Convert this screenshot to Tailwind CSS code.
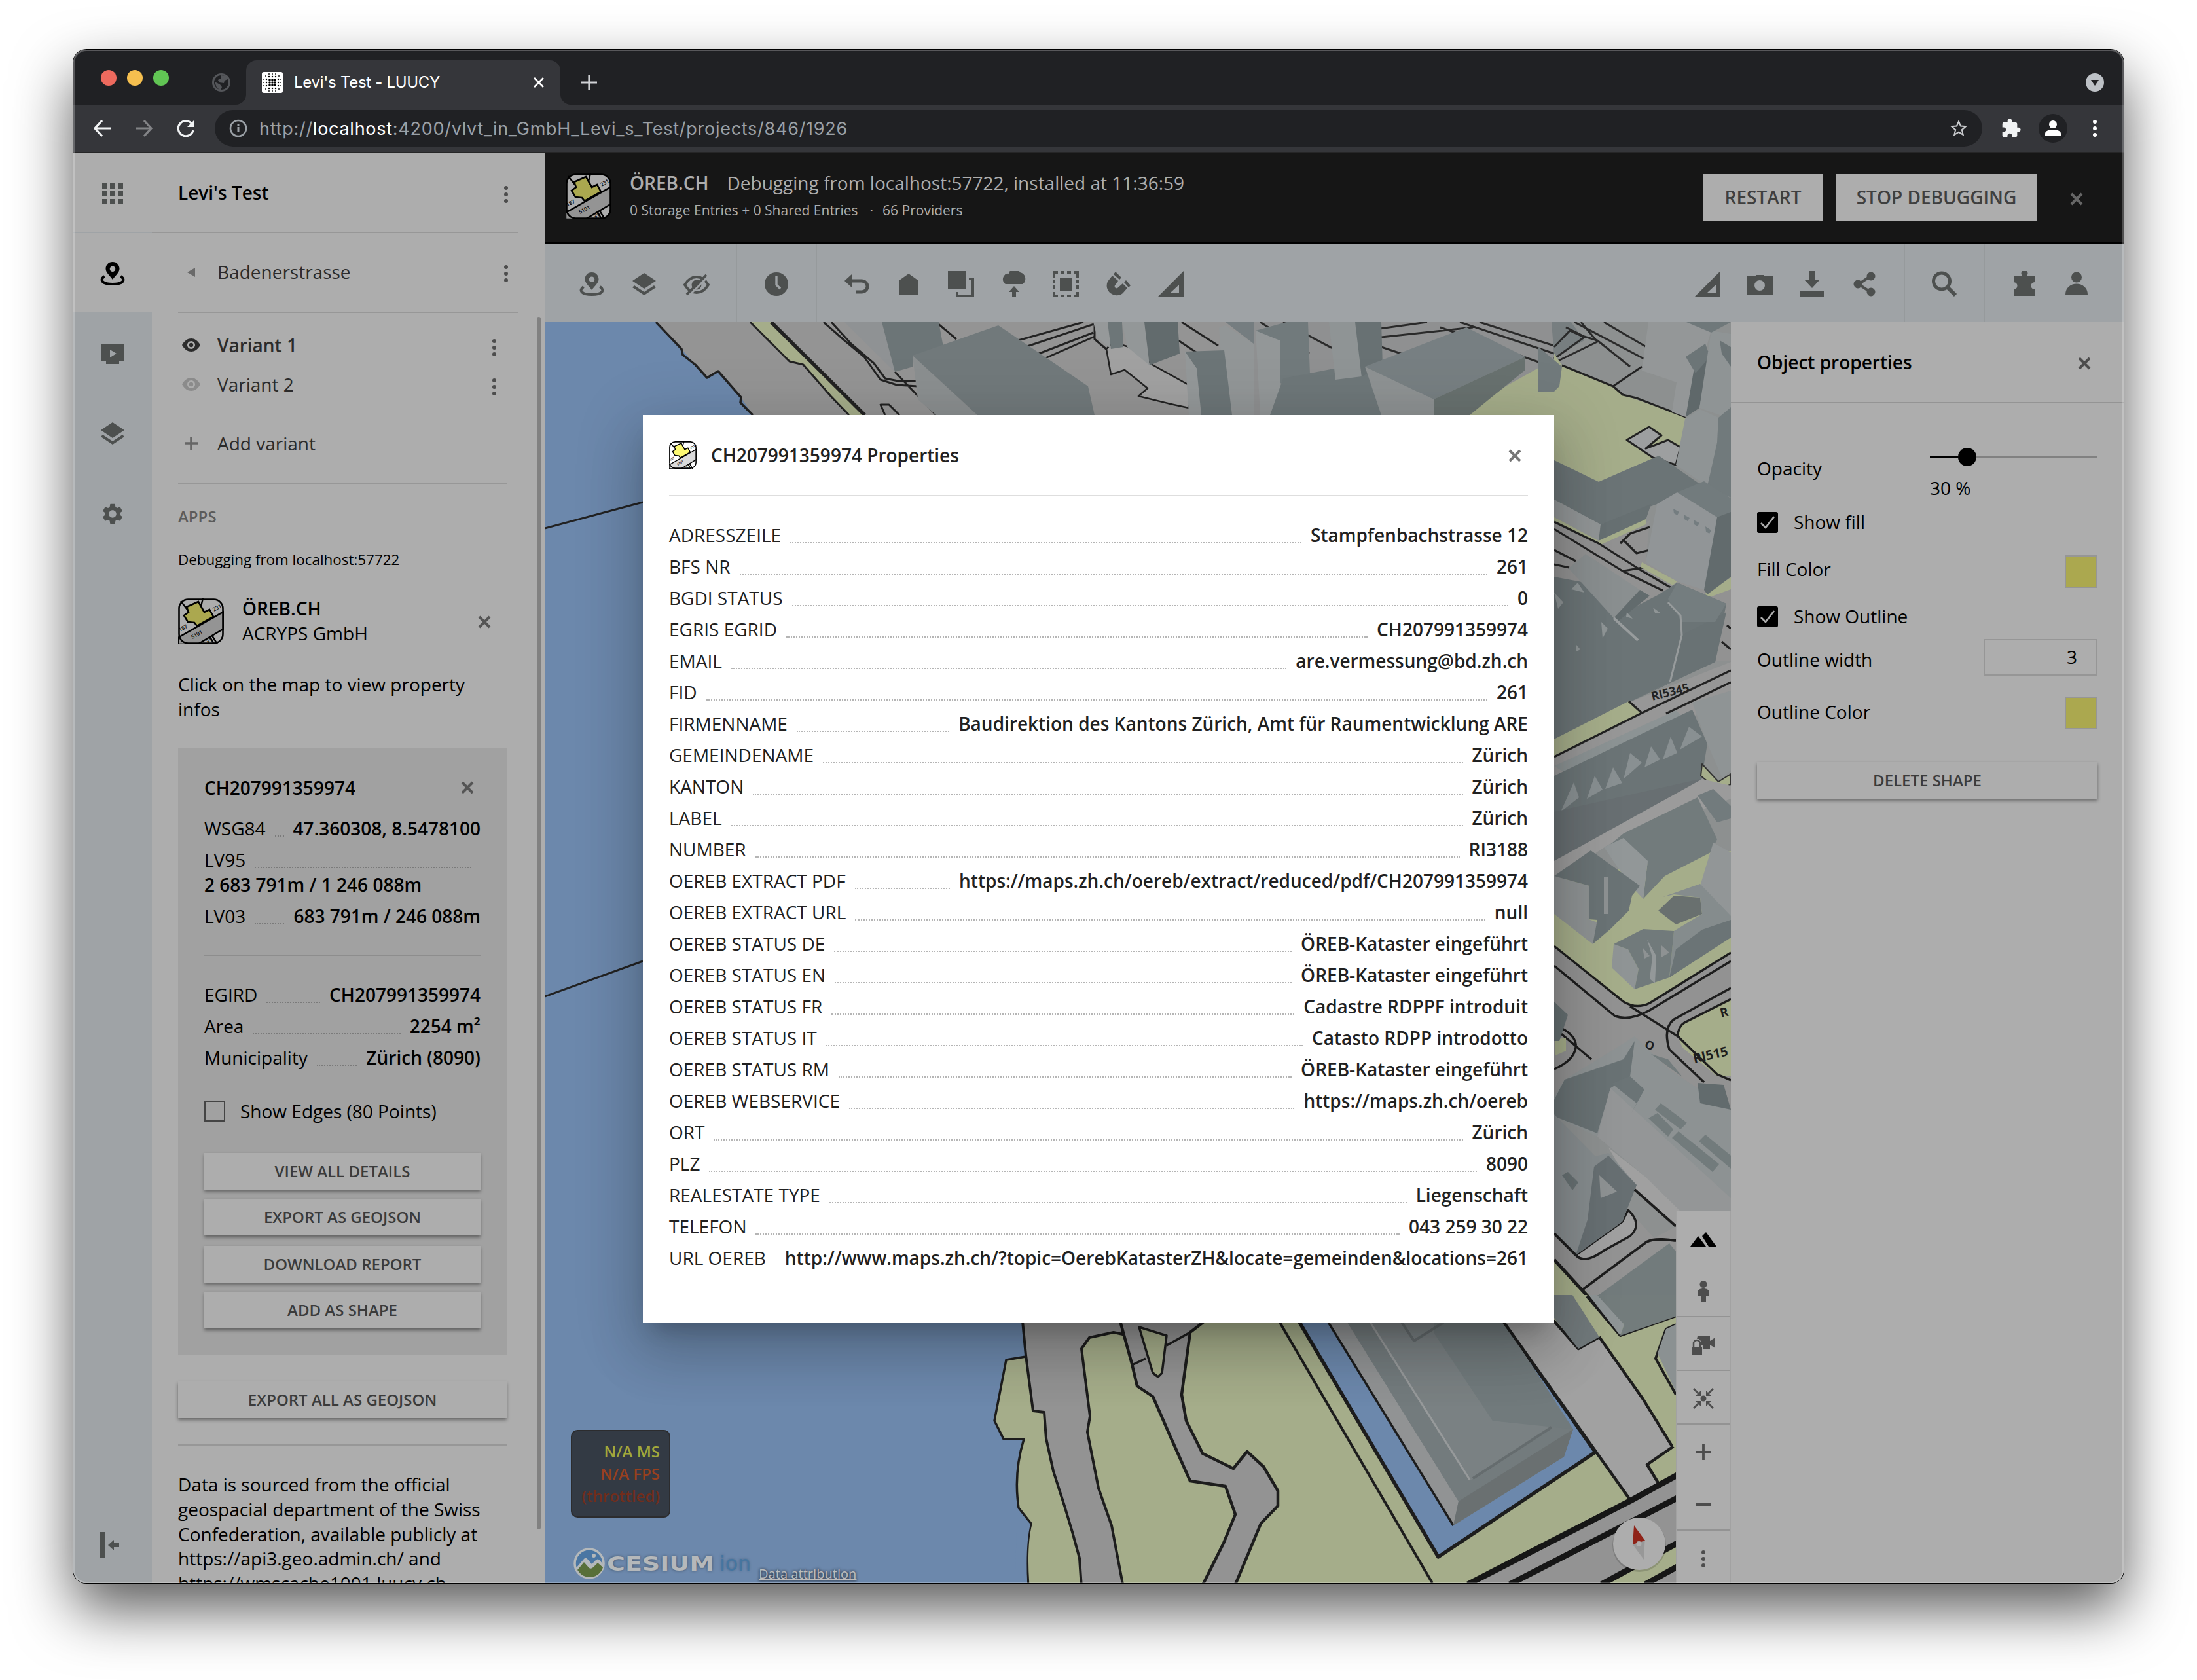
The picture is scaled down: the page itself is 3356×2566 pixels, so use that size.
<!DOCTYPE html>
<html lang="en">
<head>
<meta charset="utf-8">
<title>Levi's Test - LUUCY</title>
<script src="https://cdn.jsdelivr.net/npm/@tailwindcss/browser@4"></script>
</head>
<body class="w-[3356px] h-[2566px] bg-white overflow-hidden font-['Open_Sans',sans-serif] text-[28px] leading-[38px] text-black">

<svg width="0" height="0" class="hidden">
  <defs>
    <symbol id="oreb" viewBox="0 0 70 70">
      <clipPath id="orebClip"><rect x="1" y="1" width="68" height="68" rx="14"/></clipPath>
      <rect x="1.5" y="1.5" width="67" height="67" rx="14" fill="var(--bg,#adadad)"/>
      <g clip-path="url(#orebClip)">
        <path d="M0 60 70 20V46L30 70H0Z" fill="var(--road,#949494)" stroke="#000" stroke-width="2.4"/>
        <path d="M4 4 14 17M38 0 35 12M52 57 60 70M49 59 54 68" stroke="#000" stroke-width="2.4" fill="none"/>
        <path d="M31 5 40 21 48 17 54 28 29 42 25 37 15 36 9 26 16 21 13 13Z" fill="var(--lot,#aba84f)" stroke="#000" stroke-width="2.6"/>
        <g font-family="Open Sans" font-size="8" font-weight="600">
          <text transform="translate(55 20) rotate(-30)">231</text>
          <text transform="translate(3 51) rotate(-30)">187</text>
          <text transform="translate(22 62) rotate(-30)">5101</text>
          <text transform="translate(45 69) rotate(-30)">31</text>
        </g>
      </g>
      <rect x="1.5" y="1.5" width="67" height="67" rx="14" fill="none" stroke="#000" stroke-width="2.6"/>
    </symbol>
    <symbol id="x" viewBox="0 0 20 20"><path d="M2 2 18 18M18 2 2 18" stroke="currentColor" stroke-width="4" fill="none"/></symbol>
    <symbol id="dots" viewBox="0 0 8 28"><circle cx="4" cy="4" r="3"/><circle cx="4" cy="14" r="3"/><circle cx="4" cy="24" r="3"/></symbol>
    <symbol id="pin" viewBox="0 0 40 40"><path fill-rule="evenodd" d="M20 2C13.500 2 9.500 7 9.500 12.500C9.500 18 15 22 20 29C25 22 30.500 18 30.500 12.500C30.500 7 26.500 2 20 2ZM20 8.500A4.200 4.200 0 1 1 20 17A4.200 4.200 0 1 1 20 8.500Z"/><path d="M7.500 24C-1 30 5 36 20 36S41 30 32.500 24" fill="none" stroke="currentColor" stroke-width="4"/></symbol>
    <symbol id="layers" viewBox="0 0 40 40"><path d="M20 3 38 15 20 27 2 15ZM5 22 20 32 35 22 38 25 20 37 2 25Z"/></symbol>
    <symbol id="ruler" viewBox="0 0 40 40"><path fill-rule="evenodd" d="M40 0V40H0ZM33 21V33H20Z"/></symbol>
    <symbol id="eye" viewBox="0 0 28 20"><path fill-rule="evenodd" d="M0 10C4 3 9 0 14 0S24 3 28 10C24 17 19 20 14 20S4 17 0 10ZM14 4A6 6 0 1 0 14 16A6 6 0 1 0 14 4Z"/><circle cx="14" cy="10" r="3.200"/></symbol>
    <symbol id="puzzle" viewBox="0 0 24 24"><path d="M20.500 11H19V7c0-1.100-.9-2-2-2h-4V3.500C13 2.120 11.880 1 10.500 1S8 2.120 8 3.500V5H4c-1.100 0-1.990.9-1.990 2v3.800H3.500c1.490 0 2.700 1.210 2.700 2.700s-1.210 2.700-2.700 2.700H2V20c0 1.100.9 2 2 2h3.800v-1.500c0-1.490 1.210-2.700 2.700-2.700 1.490 0 2.700 1.210 2.700 2.700V22H17c1.100 0 2-.9 2-2v-4h1.500c1.380 0 2.500-1.120 2.500-2.500S21.880 11 20.500 11z"/></symbol>
  </defs>
</svg>

<div class="pt-[76px] pl-[112px]">
<div class="relative w-[3132px] h-[2342px] rounded-[20px] shadow-[0_0_0_1px_#000,0_40px_90px_rgba(0,0,0,0.65)]">
<div class="flex flex-col w-full h-full rounded-[20px] overflow-hidden bg-[#adadad]">

  <!-- tab strip -->
  <div class="h-[84px] shrink-0 bg-[#202124] flex items-start font-['Inter',sans-serif]">
    <div class="flex gap-4 ml-[42px] mt-[31px]">
      <div class="size-6 rounded-full bg-[#ed6a5e]"></div><div class="size-6 rounded-full bg-[#f5bf4f]"></div><div class="size-6 rounded-full bg-[#61c554]"></div>
    </div>
    <svg class="size-[30px] ml-[65px] mt-[35px]" viewBox="0 0 30 30"><circle cx="15" cy="15" r="12.500" fill="none" stroke="#54565a" stroke-width="3"/><path d="M15 4 22 5 25 10 20 12 19 16 12 15 10 11 14 9ZM5 14 13 18 16 22 14 27 8 23Z" fill="#54565a"/></svg>
    <div class="relative w-[480px] h-[68px] mt-4 ml-[23px] rounded-t-[16px] bg-[#35363a] flex items-center pl-6 pr-[24px] text-white text-[24px]">
      <svg class="absolute -left-4 bottom-0 size-4" viewBox="0 0 16 16"><path d="M16 0V16H0A16 16 0 0 0 16 0Z" fill="#35363a"/></svg>
      <svg class="absolute -right-4 bottom-0 size-4" viewBox="0 0 16 16"><path d="M0 0V16H16A16 16 0 0 1 0 0Z" fill="#35363a"/></svg>
      <svg class="size-8" viewBox="0 0 32 32"><rect width="32" height="32" rx="3" fill="#fff"/>
        <g stroke="#000" stroke-linecap="round"><path d="M11 3H11M16 3H16M21 3H21M11 29H11M16 29H16M21 29H21M3 11V11M3 16V16M3 21V21M29 11V11M29 16V16M29 21V21M6 6H6M26 6H26M6 26H6M26 26H26" stroke-width="1.800"/><path d="M11 7H11M16 7H16M21 7H21M11 25H11M16 25H16M21 25H21M7 11V11M7 16V16M7 21V21M25 11V11M25 16V16M25 21V21" stroke-width="2.500"/><path d="M12 12H12M16 12H16M20 12H20M12 16H12M16 16H16M20 16H20M12 20H12M16 20H16M20 20H20" stroke-width="3.600"/></g></svg>
      <span class="ml-[17px] tracking-[-0.3px] whitespace-nowrap">Levi's Test - LUUCY</span>
      <svg class="size-[18px] ml-auto" viewBox="0 0 18 18"><path d="M2 2 16 16M16 2 2 16" stroke="#fff" stroke-width="2.600"/></svg>
    </div>
    <svg class="size-6 ml-8 mt-[38px]" viewBox="0 0 24 24"><path d="M12 0V24M0 12H24" stroke="#d0d2d5" stroke-width="3.200"/></svg>
    <svg class="size-7 ml-auto mr-[30px] mt-9" viewBox="0 0 28 28"><circle cx="14" cy="14" r="14" fill="#bdc1c6"/><path d="M8 10H20L14 19Z" fill="#202124"/></svg>
  </div>

  <!-- address bar -->
  <div class="h-[74px] shrink-0 bg-[#35363a] border-b-2 border-[#262627] flex items-center">
    <svg class="w-[26px] h-[26px] ml-[31px]" viewBox="0 0 26 26"><path d="M13 1 2 13 13 25M2 13H26" fill="none" stroke="#f1f3f4" stroke-width="3.200"/></svg>
    <svg class="w-[26px] h-[26px] ml-[38px]" viewBox="0 0 26 26"><path d="M13 1 24 13 13 25M24 13H0" fill="none" stroke="#828386" stroke-width="3.200"/></svg>
    <svg class="size-7 ml-[37px]" viewBox="0 0 28 28"><path d="M23.500 8A11.500 11.500 0 1 0 25 17" fill="none" stroke="#f1f3f4" stroke-width="3.200"/><path d="M27 1V12H16Z" fill="#f1f3f4"/></svg>
    <div class="w-[2700px] h-14 ml-[30px] rounded-full bg-[#202124] flex items-center pl-[22px] pr-5">
      <svg class="size-7" viewBox="0 0 28 28"><circle cx="14" cy="14" r="12" fill="none" stroke="#9aa0a6" stroke-width="2.600"/><path d="M12.500 12H15.500V20H12.500ZM12.500 7.500H15.500V10.300H12.500Z" fill="#9aa0a6"/></svg>
      <span class="ml-[18px] pt-px font-['Inter',sans-serif] text-[27px] tracking-[0.73px] text-[#9aa0a6] whitespace-nowrap">http://<span class="text-white">localhost</span>:4200/vlvt_in_GmbH_Levi_s_Test/projects/846/1926</span>
      <svg class="size-8 ml-auto" viewBox="0 0 24 24" fill="#c8cacd"><path d="M22 9.240l-7.190-.62L12 2 9.190 8.630 2 9.240l5.460 4.730L5.820 21 12 17.270 18.180 21l-1.630-7.030L22 9.240zM12 15.400l-3.760 2.270 1-4.280-3.320-2.880 4.380-.38L12 6.100l1.710 4.040 4.380.38-3.320 2.880 1 4.280L12 15.400z"/></svg>
    </div>
    <svg class="size-8 ml-[28px]" viewBox="0 0 24 24" fill="#f1f3f4"><use href="#puzzle"/></svg>
    <div class="size-11 rounded-full bg-[#202124] ml-[26px] flex items-center justify-center"><svg class="size-6" viewBox="0 0 24 24" fill="#fff"><circle cx="12" cy="6" r="6"/><path d="M0 24V20C0 16 6 14 12 14S24 16 24 20V24Z"/></svg></div>
    <svg class="w-2 h-7 ml-[38px] fill-white"><use href="#dots"/></svg>
  </div>

  <div class="flex flex-1 min-h-0">
    <!-- icon rail -->
    <div class="w-[120px] shrink-0 bg-[#9fa3a6] flex flex-col items-center text-[#4d504f] fill-[#4d504f]">
      <div class="w-full h-[120px] bg-[#adadad] flex items-center justify-center">
        <svg class="size-8 mt-1" viewBox="0 0 32 32"><path d="M0 0h8v8H0zM12 0h8v8h-8zM24 0h8v8h-8zM0 12h8v8H0zM12 12h8v8h-8zM24 12h8v8h-8zM0 24h8v8H0zM12 24h8v8h-8zM24 24h8v8h-8z"/></svg>
      </div>
      <div class="w-full h-[120px] mt-0.5 bg-[#adadad] flex items-center justify-center text-black fill-black"><svg class="size-10 mt-1"><use href="#pin"/></svg></div>
      <svg class="w-9 h-[30px] mt-[50px]" viewBox="0 0 36 30"><path fill-rule="evenodd" d="M0 0H36V26H28V30H8V26H0ZM14 8V20L24 14Z"/></svg>
      <svg class="size-10 mt-[86px]"><use href="#layers"/></svg>
      <svg class="size-[38px] mt-[84px]" viewBox="0 0 24 24"><path d="M19.140 12.940c.04-.3.06-.61.06-.94 0-.32-.02-.64-.07-.94l2.030-1.580c.18-.14.23-.41.12-.61l-1.920-3.320c-.12-.22-.37-.29-.59-.22l-2.390.96c-.5-.38-1.030-.7-1.620-.94l-.36-2.540c-.04-.24-.24-.41-.48-.41h-3.840c-.24 0-.43.17-.47.41l-.36 2.540c-.59.24-1.130.57-1.620.94l-2.390-.96c-.22-.08-.47 0-.59.22L2.740 8.870c-.12.21-.08.47.12.61l2.030 1.580c-.05.3-.09.63-.09.94s.02.64.07.94l-2.030 1.580c-.18.14-.23.41-.12.61l1.920 3.320c.12.22.37.29.59.22l2.390-.96c.5.38 1.030.7 1.620.94l.36 2.540c.05.24.24.41.48.41h3.840c.24 0 .44-.17.47-.41l.36-2.540c.59-.24 1.130-.56 1.620-.94l2.390.96c.22.08.47 0 .59-.22l1.920-3.320c.12-.22.07-.47-.12-.61l-2.010-1.580zM12 15.600c-1.980 0-3.600-1.620-3.600-3.600s1.620-3.600 3.600-3.600 3.600 1.620 3.600 3.600-1.620 3.600-3.600 3.600z"/></svg>
      <svg class="w-[30px] h-10 mt-auto mb-[38px] mr-[10px]" viewBox="0 0 30 40"><path d="M0 0H8V40H0ZM13 20 22 12V17H30V23H22V28Z"/></svg>
    </div>

    <!-- sidebar -->
    <div class="relative w-[600px] shrink-0 flex flex-col overflow-hidden text-[#2b2b2b]">
      <div class="h-[122px] shrink-0 mr-10 pl-10 pr-[15px] border-b-2 border-[#979797] flex items-center justify-between">
        <span class="font-semibold text-black">Levi's Test</span>
        <svg class="w-2 h-7 mt-[6px] fill-[#4d4d4d]"><use href="#dots"/></svg>
      </div>
      <div class="h-[122px] shrink-0 mx-10 pr-[15px] pb-[2px] border-b-2 border-[#979797] flex items-center">
        <svg class="w-3 h-[14px] ml-[14px] mt-px" viewBox="0 0 12 14"><path d="M12 0V14L0 7Z" fill="#6a6a6a"/></svg>
        <span class="ml-[34px]">Badenerstrasse</span>
        <svg class="w-2 h-7 mt-[6px] ml-auto fill-[#4d4d4d]"><use href="#dots"/></svg>
      </div>
      <div class="pl-10 w-[542px] flex flex-col shrink-0">
        <div class="mt-[19px] h-[60px] flex items-center pl-[6px] pr-[15px]"><svg class="w-7 h-5 fill-[#2b2b2b]"><use href="#eye"/></svg><span class="ml-[26px] font-semibold">Variant 1</span><svg class="w-2 h-7 mt-2 ml-auto fill-[#4d4d4d]"><use href="#dots"/></svg></div>
        <div class="h-[60px] flex items-center pl-[6px] pr-[15px]"><svg class="w-7 h-5 fill-[#8b8b8b]"><use href="#eye"/></svg><span class="ml-[26px]">Variant 2</span><svg class="w-2 h-7 mt-2 ml-auto fill-[#4d4d4d]"><use href="#dots"/></svg></div>
        <div class="mt-[30px] h-[60px] flex items-center pl-[10px]"><svg class="size-5" viewBox="0 0 20 20"><path d="M10 0V20M0 10H20" stroke="#666" stroke-width="3.600"/></svg><span class="ml-[30px]">Add variant</span></div>
        <div class="mt-[31px] h-0.5 bg-[#979797]"></div>
        <div class="mt-[33px] text-[24px] leading-8 text-[#5b5b5b] font-semibold">APPS</div>
        <div class="mt-[35px] text-[22.4px] leading-[30px] text-black">Debugging from localhost:57722</div>
        <div class="mt-[44px] h-[70px] flex items-center text-black">
          <svg class="size-[70px]"><use href="#oreb"/></svg>
          <div class="ml-[28px] -mt-0.5"><div class="font-semibold">ÖREB.CH</div><div>ACRYPS GmbH</div></div>
          <svg class="size-5 ml-auto mr-[24px] mt-px text-[#555]"><use href="#x"/></svg>
        </div>
        <div class="mt-[42px] text-black">Click on the map to view property<br>infos</div>
        <div class="mt-10 h-[928px] bg-[#a1a1a1] px-10 pt-[42px] flex flex-col text-black">
          <div class="flex items-center justify-between"><span class="font-semibold">CH207991359974</span><svg class="size-5 mr-[10px] text-[#555]"><use href="#x"/></svg></div>
          <div class="mt-[24px] flex items-baseline"><span>WSG84</span><i class="flex-1 mx-[14px] border-b-2 border-dotted border-[#7a7a7a] translate-y-0.5"></i><b class="font-semibold">47.360308, 8.5478100</b></div>
          <div class="mt-[10px] flex items-baseline"><span>LV95</span><i class="flex-1 mx-[14px] border-b-2 border-dotted border-[#7a7a7a] translate-y-0.5"></i></div>
          <div class="font-semibold">2 683 791m / 1 246 088m</div>
          <div class="mt-[10px] flex items-baseline"><span>LV03</span><i class="flex-1 mx-[14px] border-b-2 border-dotted border-[#7a7a7a] translate-y-0.5"></i><b class="font-semibold">683 791m / 246 088m</b></div>
          <div class="mt-10 h-0.5 bg-[#8d8d8d]"></div>
          <div class="mt-[40px] flex items-baseline"><span>EGIRD</span><i class="flex-1 mx-[14px] border-b-2 border-dotted border-[#7a7a7a] translate-y-0.5"></i><b class="font-semibold">CH207991359974</b></div>
          <div class="mt-[10px] flex items-baseline"><span>Area</span><i class="flex-1 mx-[14px] border-b-2 border-dotted border-[#7a7a7a] translate-y-0.5"></i><b class="font-semibold">2254 m²</b></div>
          <div class="mt-[10px] flex items-baseline"><span>Municipality</span><i class="flex-1 mx-[14px] border-b-2 border-dotted border-[#7a7a7a] translate-y-0.5"></i><b class="font-semibold">Zürich (8090)</b></div>
          <div class="mt-[47px] h-8 flex items-center"><div class="size-8 border-2 border-[#444]"></div><span class="ml-[23px]">Show Edges (80 Points)</span></div>
          <div class="mt-12 flex flex-col text-[24px] text-[#3b3b3b] font-semibold text-center leading-[55px]">
            <div class="h-14 bg-[#adadad] shadow-[0_3px_5px_rgba(0,0,0,0.4)]">VIEW ALL DETAILS</div>
            <div class="h-14 mt-[14px] bg-[#adadad] shadow-[0_3px_5px_rgba(0,0,0,0.4)]">EXPORT AS GEOJSON</div>
            <div class="h-14 mt-4 bg-[#adadad] shadow-[0_3px_5px_rgba(0,0,0,0.4)]">DOWNLOAD REPORT</div>
            <div class="h-14 mt-[14px] bg-[#adadad] shadow-[0_3px_5px_rgba(0,0,0,0.4)]">ADD AS SHAPE</div>
          </div>
        </div>
        <div class="mt-10 h-14 bg-[#adadad] shadow-[0_3px_5px_rgba(0,0,0,0.4)] text-[24px] text-[#3b3b3b] font-semibold text-center leading-[55px]">EXPORT ALL AS GEOJSON</div>
        <div class="mt-10 h-0.5 bg-[#979797]"></div>
        <div class="mt-[41px] text-black leading-[37.8px] whitespace-nowrap">Data is sourced from the official<br>geospacial department of the Swiss<br>Confederation, available publicly at<br>https://api3.geo.admin.ch/ and<br>https://wmscache1001.luucy.ch</div>
      </div>
      <div class="absolute left-[588px] top-[250px] w-[6px] h-[1852px] rounded-full bg-[#818181]"></div>
    </div>

    <!-- main column -->
    <div class="flex-1 flex flex-col min-w-0">
      <div class="h-[138px] shrink-0 bg-[#161616] border-b-2 border-black flex items-center pl-8 pr-[62px] text-[#adadad]">
        <svg class="size-[70px] -mt-[4px]"><use href="#oreb"/></svg>
        <div class="ml-[28px] -mt-[8px]">
          <div class="flex"><span class="font-semibold">ÖREB.CH</span><span class="ml-7">Debugging from localhost:57722, installed at 11:36:59</span></div>
          <div class="mt-[8px] text-[21px] leading-[30px] flex"><span>0 Storage Entries + 0 Shared Entries</span><span class="ml-[18px]">·</span><span class="ml-[14px]">66 Providers</span></div>
        </div>
        <div class="ml-auto flex gap-5 font-semibold text-[#3f3f3f] text-center leading-[71px]">
          <div class="w-[182px] h-[72px] bg-[#adadad]">RESTART</div><div class="w-[308px] h-[72px] bg-[#adadad]">STOP DEBUGGING</div>
        </div>
        <svg class="size-5 ml-[50px] mt-1 text-[#666]"><use href="#x"/></svg>
      </div>

      <div class="h-[120px] shrink-0 bg-[#9fa3a6] flex text-[#4d504f] fill-[#4d504f]">
        <div class="w-[294px] pl-8 pt-[42px] border-r-2 border-[#969a9c] flex">
          <svg class="size-10 mx-5"><use href="#pin"/></svg>
          <svg class="size-10 mx-5"><use href="#layers"/></svg>
          <svg class="size-10 mx-5" viewBox="0 0 40 40"><path d="M2 21C8 11 14 9 20 9S32 11 38 21C32 31 26 33 20 33S8 31 2 21Z" fill="none" stroke="currentColor" stroke-width="4"/><circle cx="20" cy="21" r="7.500"/><path d="M8 38 38 8" stroke="#9fa3a6" stroke-width="3"/><path d="M5 36 35 6" stroke="currentColor" stroke-width="3.800"/></svg>
        </div>
        <div class="w-[122px] px-5 pt-[42px] border-r-2 border-[#969a9c] flex">
          <svg class="size-10 mx-5" viewBox="0 0 40 40"><circle cx="20" cy="20" r="18"/><path d="M20 7V21L26 27" fill="none" stroke="#9fa3a6" stroke-width="3.400"/></svg>
        </div>
        <div class="pl-5 pt-[42px] flex">
          <svg class="size-10 mx-5" viewBox="0 0 40 40"><path d="M2 15 13 5V25Z"/><path d="M11 15H28A9 8.500 0 0 1 28 32H19" fill="none" stroke="currentColor" stroke-width="5"/></svg>
          <svg class="size-10 mx-5" viewBox="0 0 40 40"><path d="M6 14 20 4 34 14V36H6Z"/></svg>
          <svg class="size-10 mx-5" viewBox="0 0 40 40"><path d="M0 0H28V28H0ZM32 10H40V40H12V32H16V36H36V14H32Z"/></svg>
          <svg class="size-10 mx-5" viewBox="0 0 40 40"><path d="M8 20A7 8 0 0 1 6 7A7 7 0 0 1 13 4A9 9 0 0 1 30 2A10 10 0 0 1 34 20ZM21 23 29 32H24V40H18V32H13Z"/></svg>
          <svg class="size-10 mx-5" viewBox="0 0 40 40"><path d="M11 10H29V30H11Z"/><path d="M2 10V2H8M12 2H18M22 2H28M32 2H38V10M38 14V18M38 22V28M38 32V38H32M28 38H22M18 38H12M8 38H2V32M2 28V22M2 18V14" fill="none" stroke="currentColor" stroke-width="4"/></svg>
          <svg class="size-10 mx-5" viewBox="0 0 40 40"><path d="M11 7 20 15 15 22A3 3 0 0 0 19 26L27 19 34 26 27 34A15 15 0 0 1 4 16ZM13 5 16 1 25 10 22 13ZM29 17 32 14 39 22 36 25Z"/></svg>
          <svg class="size-10 mx-5"><use href="#ruler"/></svg>
        </div>
        <div class="ml-auto pr-5 pt-[42px] flex border-r-2 border-[#969a9c]">
          <svg class="size-10 mx-5"><use href="#ruler"/></svg>
          <svg class="size-10 mx-5" viewBox="0 0 40 40"><path fill-rule="evenodd" d="M0 8H14V6H26V8H40V36H0ZM20 14A8 8 0 1 0 20 30A8 8 0 1 0 20 14Z"/></svg>
          <svg class="size-10 mx-5" viewBox="0 0 40 40"><path d="M15 0H25V13H32L20 26 8 13H15ZM2 30H38V40H2Z"/></svg>
          <svg class="size-10 mx-5" viewBox="0 0 40 40"><path d="M29 8 11 20 29 32" fill="none" stroke="currentColor" stroke-width="4"/><circle cx="30" cy="8" r="6.500"/><circle cx="10" cy="20" r="6.500"/><circle cx="30" cy="32" r="6.500"/></svg>
        </div>
        <div class="w-[122px] px-5 pt-[42px] border-r-2 border-[#969a9c]"><svg class="size-10 mx-5" viewBox="0 0 40 40"><circle cx="16" cy="15.500" r="12.500" fill="none" stroke="currentColor" stroke-width="5"/><path d="M24 24 37 37" stroke="currentColor" stroke-width="6"/></svg></div>
        <div class="pl-5 pr-8 pt-[42px] flex">
          <svg class="size-10 mx-5" viewBox="0 0 40 40"><path d="M4 8H18A5 5 0 1 1 23 8H36V17A5.500 5.500 0 1 0 36 28V38H4V28A5.500 5.500 0 1 0 4 17Z"/></svg>
          <svg class="size-10 mx-5" viewBox="0 0 40 40"><circle cx="20" cy="9.500" r="8"/><path d="M3 36C3 14 37 14 37 36Z"/></svg>
        </div>
      </div>

      <div class="flex-1 flex min-h-0">
        <!-- map -->
        <div class="relative w-[1812px] h-[1926px] shrink-0 overflow-hidden bg-[#949494]">
          <svg class="absolute inset-0 w-full h-full" viewBox="832 492 1812 1926" stroke-linejoin="round">
            <path d="M832 492H1002L1041 533 1062 557 1080 577 1097 567 1132 607 1150 634 1562 2020V2418H832Z" fill="#6c88ac"/>
            <path d="M1002 492 1041 533 1043 542 1062 557 1080 577 1097 567 1132 607 1131 615 1150 634" fill="none" stroke="#222" stroke-width="3.500"/><path d="M832 807 982 767M832 1522 982 1468" fill="none" stroke="#222" stroke-width="3"/>
            <path d="M1146 492H1178L1321 634H1297L1269 605 1227 557 1206 552Z" fill="#a5ad8a"/>
            <g fill="none" stroke="#222" stroke-width="3">
              <path d="M1146 492 1206 552 1227 557 1269 605 1297 634"/><path d="M1178 492 1321 634" stroke-width="5.500"/>
              <path d="M1258 492 1290 520 1320 545 1345 580 1370 588 1402 590M1270 492 1300 525 1335 555 1352 578 1372 582 1402 582M1430 492 1461 518M1367 568 1430 634"/><path d="M1352 634 1345 618 1358 618 1374 634" />
              <path d="M1555 520 1655 492M1560 532 1680 492M1582 542 1670 508M1590 550 1672 514M1672 492V518L1692 535M1805 492 1861 528M1800 520 1830 540"/>
            </g>
            <path d="M1690 533 1700 523 1725 530 1760 557 1816 588V623L1788 617 1739 605 1753 593 1718 565 1697 572Z" fill="#a1a1a1" stroke="#222" stroke-width="2.500"/>
            <path d="M1290 492H1347L1367 568Z" fill="#8f9294"/><path d="M1347 492H1434L1441 530 1395 543V560L1367 568Z" fill="#6c7577"/>
            <path d="M1394 543 1493 634H1430L1402 610Z" fill="#8b8f90"/><path d="M1525 497 1394 543 1493 634H1672L1662 590 1599 547Z" fill="#71797b"/>
            <path d="M1670 492H1692L1697 533 1676 515Z" fill="#96999a"/><path d="M1692 492H1714L1716 530 1697 533Z" fill="#6d7678"/><path d="M1714 492H1748L1756 558 1722 530Z" fill="#939798"/><path d="M1748 492H1799L1802 540 1756 558Z" fill="#626b6d"/>
            <path d="M1862 500 1872 497 1915 525 1915 634H1875L1865 545Z" fill="#929697"/><path d="M1810 537 1870 535 1882 634H1830L1828 563Z" fill="#6c7577"/><path d="M1810 537 1828 563 1835 634H1816Z" fill="#949899"/><path d="M1872 492H1915V525Z" fill="#757d80"/>
            <!-- northern block -->
            <path d="M1915 492H2374V634H1915Z" fill="#8f9091"/>
            <g fill="none" stroke="#2a2a2a" stroke-width="3"><path d="M1925 492 2000 540M1960 492 2060 545M2050 510 2180 492M2110 515 2250 500M2110 530 2200 560M2200 500 2370 560M2230 492 2374 540M2260 492 2374 528"/></g>
            <path d="M1918 505 1965 492H1998L2002 598 1955 585Z" fill="#717a7c"/><path d="M1918 505 1955 520V585L1960 634H1925Z" fill="#939798"/>
            <path d="M1960 578 2095 552 2165 590V634H1940Z" fill="#6e7779"/><path d="M2030 492H2070L2080 575 2040 580Z" fill="#8f9495"/><path d="M2070 492H2110L2112 560 2080 575Z" fill="#687173"/>
            <path d="M2240 634 2300 590 2350 562 2374 552V634Z" fill="#a5ad8a"/>
            <path d="M2085 560 2240 500 2330 545 2190 610Z" fill="#777f82"/><path d="M2085 560 2190 610V634H2110Z" fill="#8e9293"/><path d="M2190 610 2330 545V565L2245 634H2190Z" fill="#68716f"/>
            <path d="M2374 492H2644V2020H2374Z" fill="#8d9090"/>
            <path d="M2370 492 2400 492 2420 520 2374 545Z" fill="#777e80"/>
            <g fill="none" stroke="#2a2a2a" stroke-width="3"><path d="M2374 530 2398 505 2420 515 2374 548M2392 500 2420 514 2440 520 2490 560M2405 492 2515 550M2450 492 2515 530M2415 492 2440 522 2370 556"/></g>
            <path d="M2374 540 2386 558 2464 590 2479 603 2575 637 2567 683 2534 696 2442 736 2374 703Z" fill="#a5ad8a"/>
            <path d="M2386 558 2464 590 2479 603 2500 608 2575 637M2464 590 2508 560" fill="none" stroke="#222" stroke-width="3"/>
            <path d="M2350 530 2386 560 2382 590 2374 598H2350Z" fill="#717a7c"/>
            <path d="M2519 652 2538 665 2514 685 2548 672 2567 683 2560 710 2525 699 2485 672Z" fill="#9d9fa0" stroke="#222" stroke-width="3"/>
            <path d="M2518 492H2600L2614 505 2575 637 2554 629 2561 584 2508 566Z" fill="#949798"/><path d="M2611 535 2596 623 2575 637 2590 550Z" fill="#5f686a"/><path d="M2575 545 2605 525 2612 545 2590 570Z" fill="#6c7577"/><path d="M2614 505 2644 510V640L2596 623Z" fill="#8f9495"/><path d="M2576 492H2644L2614 508Z" fill="#6f787a"/><path d="M2627 520 2644 530V560L2630 540Z" fill="#6a7375"/>
            <path d="M2574 640 2597 625 2625 638 2623 676 2608 743 2560 710Z" fill="#8f9495"/><path d="M2625 638 2644 622V760L2608 743 2623 676Z" fill="#717a7c"/>
            <path d="M2374 703 2442 736 2534 696 2602 743 2562 752 2531 770 2445 801 2374 763Z" fill="#6b7476"/><path d="M2374 763 2445 801 2442 826 2374 790Z" fill="#929697"/><path d="M2445 801 2522 770 2514 794 2442 826Z" fill="#677072"/>
            <path d="M2374 800 2442 830 2520 795 2514 859 2603 901 2644 880V1010H2374Z" fill="#929292"/>
            <path d="M2374 790 2442 826 2514 793V801L2445 832 2374 797Z" fill="#a5ad8a"/>
            <g fill="none" stroke="#222" stroke-width="3.200"><path d="M2374 797 2442 830 2505 870 2560 902M2374 808 2480 873 2540 902M2374 840 2407 857M2374 862 2397 867M2480 825 2500 845 2520 840M2475 830 2490 815 2520 805M2480 872 2515 866"/></g>
            <path d="M2508 859 2562 888 2555 894 2506 866Z" fill="#a5ad8a"/><path d="M2603 908 2644 882V900L2612 912Z" fill="#a5ad8a"/>
            <path d="M2531 770 2562 752 2623 790 2620 824 2603 901 2562 888 2514 859Z" fill="#919597"/><path d="M2562 752 2603 735 2644 761V800L2623 790Z" fill="#727b7d"/><path d="M2623 790 2644 782V881L2608 908 2603 901Z" fill="#626b6d"/>
            <g fill="#747d80"><path d="M2556 777 2565 782 2562 787 2557 784ZM2572 786 2581 791 2578 796 2573 793ZM2587 794 2596 799 2593 804 2588 801ZM2605 804 2614 810 2611 815 2606 812Z"/></g>
            <path d="M2374 881 2422 890 2465 944 2534 908 2562 890 2637 922 2620 1011 2551 1042 2488 1073 2374 1129Z" fill="#6b7476"/><path d="M2551 1042 2569 970 2637 935 2620 1011 2488 1073Z" fill="#697274"/><path d="M2562 890 2637 922 2620 950 2569 950 2548 915Z" fill="#747d7f"/>
            <path d="M2422 846 2505 901 2465 944 2396 868Z" fill="#8a8f90"/><path d="M2505 901 2465 944 2470 950 2520 910Z" fill="#626b6d"/>
            <path d="M2551 1042 2569 970 2567 940 2548 920" fill="none" stroke="#979b9c" stroke-width="3"/><path d="M2465 944 2502 978" stroke="#989c9d" stroke-width="4"/>
            <g fill="#8f9596"><path d="M2374 905 2388 920 2380 930ZM2410 890 2420 905 2400 900ZM2446 950 2456 960 2448 975ZM2485 935 2494 945 2484 942ZM2408 985 2414 992 2408 995ZM2525 928 2536 936 2528 936Z"/></g>
            <path d="M2644 1011 2488 1073 2508 1089 2374 1154V1200L2560 1110 2644 1060Z" fill="#979797"/>
            <path d="M2374 1129 2488 1071 2508 1089 2374 1154Z" fill="#a5ad8a"/>
            <g fill="none" stroke="#222" stroke-width="3.200"><path d="M2644 1024 2508 1089 2374 1156M2488 1071 2508 1089M2644 1042 2545 1090M2630 980 2644 992M2638 955 2644 960"/></g>
            <text transform="translate(2524 1070) rotate(-14)" font-family="Open Sans" font-size="18" font-weight="700" fill="#222">RI5345</text>
            <path d="M2374 1170 2560 1085 2570 1095 2390 1180Z" fill="#8c9394"/>
            <path d="M2374 1185 2585 1084 2608 1136 2597 1203 2374 1290Z" fill="#6b7476"/>
            <g fill="#899092"><path d="M2384 1240 2404 1195 2412 1218ZM2424 1220 2436 1185 2448 1206ZM2452 1205 2464 1172 2478 1196ZM2480 1190 2490 1150 2508 1165ZM2512 1172 2522 1140 2536 1160ZM2540 1160 2552 1125 2562 1150ZM2566 1145 2580 1110 2600 1125Z"/></g>
            <path d="M2585 1073 2644 1055V1176L2631 1189 2608 1136Z" fill="#8f9495"/>
            <path d="M2600 1167 2625 1194 2644 1182V1198L2625 1207 2598 1185Z" fill="#a5ad8a" stroke="#333" stroke-width="2"/>
            <path d="M2374 1240 2597 1190 2593 1200 2374 1315Z" fill="#686f72"/>
            <path d="M2374 1315 2600 1190 2644 1200V1220L2457 1290 2374 1345Z" fill="#9b9b9b"/>
            <path d="M2593 1215 2617 1205 2644 1231V1250L2623 1256Z" fill="#727b7d"/>
            <path d="M2374 1345V1445L2490 1537H2510L2644 1455V1300L2613 1302Z" fill="#a5ad8a"/>
            <path d="M2457 1292 2480 1273 2593 1218 2623 1282 2613 1302 2543 1338 2510 1373 2517 1315Z" fill="#727b7c"/><path d="M2450 1294 2480 1280 2517 1315 2510 1373 2487 1348Z" fill="#929798"/>
            <path d="M2374 1338 2428 1353 2427 1404 2440 1409 2433 1442 2374 1396Z" fill="#8e9293"/><path d="M2374 1338 2430 1299 2505 1353 2493 1368 2488 1391 2460 1419 2433 1442 2440 1405 2427 1404 2428 1353Z" fill="#6a7375"/><path d="M2450 1340H2457V1396H2450Z" fill="#8e9293"/>
            <path d="M2617 1287 2644 1302V1410L2597 1353Z" fill="#929697"/>
            <path d="M2533 1391 2557 1368 2597 1371 2600 1396 2560 1412Z" fill="#69706f"/><path d="M2540 1370 2597 1350 2644 1399V1430L2610 1450 2550 1493 2557 1422 2600 1396 2597 1371 2557 1366Z" fill="#858c8d"/><path d="M2600 1420 2644 1405V1432L2550 1493 2560 1450Z" fill="#6b7476"/>
            <path d="M2465 1442 2487 1450 2503 1480 2497 1511 2462 1478Z" fill="#8f9495"/><path d="M2465 1442 2510 1419 2557 1422 2550 1493 2497 1511 2503 1480 2487 1450Z" fill="#717a7b"/><path d="M2516 1435 2530 1460 2528 1502 2520 1495 2524 1462Z" fill="#939899"/><path d="M2509 1447 2520 1460 2512 1464ZM2538 1444 2550 1455 2538 1462Z" fill="#8e9293"/>
            <!-- crossroads -->
            <path d="M2374 1445 2490 1537H2510L2644 1455V1700H2374Z" fill="#929292"/>
            <path d="M2563 1583Q2563 1568 2573 1562L2644 1526V1644H2623L2570 1600Z" fill="#a5ad8a"/>
            <g fill="none" stroke="#1d1d1d" stroke-width="3.500"><path d="M2374 1445 2480 1530Q2500 1542 2520 1532L2644 1455M2374 1475 2467 1552Q2490 1560 2520 1543L2644 1468M2490 1537 2563 1583 2623 1641 2644 1650M2644 1509 2557 1557Q2540 1570 2550 1603L2603 1653M2563 1583Q2563 1568 2573 1562L2644 1526"/><path d="M2374 1565Q2410 1580 2407 1600T2374 1633M2380 1575 2431 1618"/></g>
            <path d="M2376 1588 2392 1585 2392 1605 2376 1612Z" fill="#a5ad8a"/><path d="M2374 1530 2395 1550 2382 1590 2374 1590Z" fill="#667072"/>
            <g font-family="Open Sans" font-weight="700" fill="#1d1d1d"><text transform="translate(2588 1624) rotate(-13)" font-size="20">RI515</text><text transform="translate(2629 1554) rotate(-13)" font-size="19">R</text><text transform="translate(2511 1600) rotate(20)" font-size="18">O</text></g>
            <path d="M2374 1674 2390 1649 2457 1608 2497 1583 2550 1634 2644 1695V1850H2567L2513 1797 2440 1736 2374 1705Z" fill="#8d9293"/>
            <path d="M2374 1680 2390 1649 2480 1618 2497 1590 2490 1644 2460 1662 2440 1731 2374 1705Z" fill="#697274"/><path d="M2460 1662 2440 1736 2513 1797 2567 1850H2644V1830Z" fill="#949697"/><path d="M2462 1655 2490 1644 2512 1664 2492 1700 2500 1685Z" fill="#6b7476"/>
            <g fill="#727b7c"><path d="M2537 1685 2577 1715 2567 1725 2528 1695ZM2518 1708 2532 1700 2556 1725 2548 1736ZM2554 1738 2564 1728 2626 1778 2616 1790ZM2605 1733 2644 1765V1785L2595 1743ZM2522 1610 2548 1618 2570 1645Z"/><path d="M2593 1654 2633 1657 2644 1695 2597 1685Z" fill="#626b6d"/></g>
            <path d="M2457 1753 2513 1797 2567 1850V1880L2497 1820Z" fill="#a0a0a0"/>
            <path d="M2374 1884 2487 1848 2527 1891 2560 1873V2020H2374Z" fill="#939393"/>
            <path d="M2407 1917 2478 1866 2487 1848Q2510 1870 2490 1888L2450 1910Q2420 1932 2407 1917Z" fill="#a0a0a0" stroke="#1d1d1d" stroke-width="3.500"/>
            <path d="M2374 1702 2437 1766 2457 1761 2500 1810 2478 1866 2407 1917 2374 1884Z" fill="#868c8e"/><path d="M2435 1782 2457 1765 2500 1810 2478 1866 2407 1917 2425 1863Z" fill="#676f72"/><path d="M2443 1795 2470 1820 2445 1830Z" fill="#8e9293"/><path d="M2386 1795 2395 1790 2411 1806 2402 1818Z" fill="#677072"/>
            <path d="M2374 1924 2440 1990 2440 2020H2374Z" fill="#a5ad8a"/><path d="M2442 1978 2550 1899 2562 1914V2020H2440Z" fill="#727b7c"/>
            <path d="M2497 1817 2560 1873M2417 1970 2515 1897Q2527 1890 2560 1895M2374 1884 2407 1917" fill="none" stroke="#1d1d1d" stroke-width="4"/><path d="M2374 1924 2440 1996" stroke="#1d1d1d" stroke-width="5"/>
            <!-- southern park -->
            <path d="M1562 2020H2644V2418H1562Z" fill="#a5ad8a"/>
            <path d="M1560 2015H1580V2330H1556V2210Z" fill="#6c88ac"/>
            <path d="M1567 2072 1537 2077 1519 2170 1533 2198 1564 2198Q1548 2250 1556 2303L1575 2327Q1566 2360 1571 2425H1660L1600 2160Z" fill="#a5ad8a" stroke="#1d1d1d" stroke-width="3.500"/>
            <path d="M1554 2310 1574 2328Q1566 2360 1569.500 2425H1550Z" fill="#6c88ac"/>
            <path d="M1562 2018 1567 2070 1578 2155 1595 2157 1598 2197 1609 2247 1626 2300 1638 2340 1649 2380 1652 2425H1716L1698 2330 1678 2273 1661 2187 1665 2163 1652 2060 1664 2043 1701 2035 1715 2038 1713 2018Z" fill="#939393" stroke="#1d1d1d" stroke-width="4"/>
            <path d="M1711 2018H1840L1818 2035 1805 2130 1812 2170 1837 2220 1884 2243 1905 2217 1930 2240 1952 2277V2300L1926 2327 1885 2425H1835L1869 2357 1887 2313 1872 2270 1818 2262 1789 2197 1761 2133 1737 2117 1729 2083Z" fill="#939393" stroke="#1d1d1d" stroke-width="4.500"/>
            <path d="M1740 2027 1782 2040 1775 2097 1769 2103 1761 2097Z" fill="#a5ad8a" stroke="#1d1d1d" stroke-width="3.500"/><path d="M1729 2085 1750 2075M1782 2055 1818 2035" stroke="#1d1d1d" stroke-width="3.500"/>
            <path d="M1955 2020 2188 2418" stroke="#1d1d1d" stroke-width="4"/>
            <path d="M1984 2018 2197 2378 2437 2218 2296 2018Z" fill="#6c88ac" stroke="#1d1d1d" stroke-width="5.500"/>
            <path d="M2028 2018 2220 2330 2389 2225 2403 2183 2296 2018Z" fill="#737b7d"/><path d="M2028 2018H2057L2228 2293 2220 2330Z" fill="#919394"/><path d="M2028 2018 2220 2330" stroke="#1d1d1d" stroke-width="3.500"/><path d="M2057 2018H2092L2245 2260 2228 2293Z" fill="#737b7d"/><path d="M2092 2018H2191L2280 2170 2370 2178 2245 2262Z" fill="#7a8183"/><path d="M2191 2018H2296L2403 2183 2280 2170 2191 2037Z" fill="#717a7c"/><path d="M2228 2293 2403 2183 2389 2225 2220 2330Z" fill="#6a7071"/><path d="M2092 2018 2245 2260" stroke="#979a9b" stroke-width="3"/><path d="M2140 2018 2160 2048 2205 2020M2250 2258 2370 2180" fill="none" stroke="#656c6e" stroke-width="4"/>
            <path d="M2296 2018H2374L2411 2060 2443 2042 2510 2137 2555 2210 2516 2237 2536 2270 2491 2292Z" fill="#a1a1a1" stroke="#1d1d1d" stroke-width="4.500"/>
            <path d="M2374 1978H2408L2443 2042 2411 2060 2374 2013Z" fill="#71797b"/>
            <path d="M2402 1978H2424L2475 2040 2560 2010V2210H2555L2510 2137 2443 2042Z" fill="#a5ad8a"/><path d="M2443 2042 2510 2137 2555 2210M2424 1980 2475 2040 2560 2010M2560 2023 2545 2030 2529 2075 2560 2130" fill="none" stroke="#1d1d1d" stroke-width="4"/>
            <path d="M2427 1978H2440L2481 2023 2475 2040Z" fill="#8f9596"/><path d="M2440 1978H2562V2010L2475 2040 2481 2023Z" fill="#737c7c"/><path d="M2545 2030 2562 2022V2130L2532 2067Z" fill="#8b9192"/>
            <path d="M2242 2418 2562 2253V2418Z" fill="#939393"/><path d="M2446 2418 2562 2357V2393L2513 2418Z" fill="#a5ad8a"/><path d="M2242 2420 2491 2292 2562 2253M2306 2420 2562 2288M2446 2420 2562 2357M2513 2420 2562 2393" fill="none" stroke="#161616" stroke-width="9"/>
          </svg>

          <!-- frame statistics -->
          <div class="absolute left-10 top-[1692px] w-[152px] h-[134px] rounded-[10px] border-2 border-[#2c2c2e] bg-[#333a44] pt-[14px] pr-[14px] text-right text-[24px] leading-[34px] font-semibold whitespace-nowrap">
            <div class="text-[#a2a83b]">N/A MS</div><div class="text-[#98401f]">N/A FPS</div><div class="text-[#722d1c]">(throttled)</div>
          </div>
          <div class="absolute left-11 top-[1864px] flex items-center">
            <svg class="size-[52px]" viewBox="0 0 52 52"><circle cx="24" cy="27" r="22" fill="#4a76a3" stroke="#b4b8ba" stroke-width="3.500"/><path d="M4 34 16 20Q19 17 22 21L28 28 34 22Q37 19 40 22L45 28A22 22 0 0 1 6 37Z" fill="#b4b8ba"/><path d="M6 37 16 25 24 34Q27 36 30 33L37 26 45 33A21 21 0 0 1 7 38Z" fill="#586f38"/><circle cx="31" cy="15" r="3" fill="#b4b8ba"/></svg>
            <span class="-ml-px w-[172px] h-[38px] mt-1"><svg class="w-[172px] h-[38px] overflow-visible" viewBox="0 0 172 38"><text x="0" y="29" textLength="164" lengthAdjust="spacingAndGlyphs" font-family="DejaVu Sans" font-weight="700" font-size="30" fill="#b5b8ba" class="[text-shadow:0_0_4px_#3c4c60]">CESIUM</text></svg></span>
            <svg class="w-[50px] h-[38px] mt-1 overflow-visible" viewBox="0 0 50 38"><text x="0" y="29" textLength="48" lengthAdjust="spacingAndGlyphs" font-family="DejaVu Sans" font-size="32" fill="#4575a0" class="[text-shadow:0_0_4px_#4d6685]">ion</text></svg>
            <span class="ml-[10px] mt-[34px] text-[20px] leading-7 tracking-[0.05px] text-[#bcbcbc] underline whitespace-nowrap [text-shadow:0_0_4px_#000]">Data attribution</span>
          </div>

          <svg class="absolute left-[1624px] top-[1818px] size-24" viewBox="2456 2310 96 96"><circle cx="2504" cy="2360" r="41" fill="#000" opacity=".15"/><circle cx="2504" cy="2358" r="40" fill="#adadad"/><path d="M2494 2359 2512.500 2353 2511 2382Z" fill="#989898"/><path d="M2496 2330 2513 2353 2494 2359Z" fill="#8f2318"/><circle cx="2503.500" cy="2358" r="4" fill="#adadad"/></svg>

          <!-- navigation controls -->
          <div class="absolute left-[1728px] top-[1358px] w-[84px] h-[568px] bg-[#adadad] border-x-2 border-[#a2a2a2] flex flex-col items-center text-[#4d4d4d] fill-[#4d4d4d]">
            <div class="w-full h-[162px] border-b-2 border-[#939393] flex flex-col items-center">
              <svg class="w-10 h-[22px] mt-8 fill-black" viewBox="0 0 40 22"><path d="M0 22 12 6 24 22ZM18 6 24 0 40 22H28Z"/></svg>
              <svg class="w-5 h-8 mt-[52px]" viewBox="0 0 20 32"><circle cx="10" cy="5.500" r="5.500"/><path d="M1 24V18C1 10 19 10 19 18V24H14V32H6V24Z"/></svg>
            </div>
            <div class="w-full h-[82px] border-b-2 border-[#939393] flex items-center justify-center"><svg class="w-9 h-7 mt-[6px]" viewBox="0 0 36 28"><path d="M9 0H28V7L36 2V18L28 13V20H17V13H15C15 6 11 3 8 4ZM0 16H16V28H0Z"/><path d="M3 16V11A5 5 0 0 1 13 11V16" fill="none" stroke="currentColor" stroke-width="2.500"/></svg></div>
            <div class="w-full h-[82px] border-b-2 border-[#939393] flex items-center justify-center"><svg class="size-8 mt-1" viewBox="0 0 32 32"><circle cx="16" cy="16" r="4.500"/><path d="M1 1 11 11M31 1 21 11M1 31 11 21M31 31 21 21" stroke="currentColor" stroke-width="3"/><path d="M12 4V12H4ZM20 4V12H28ZM12 28V20H4ZM20 28V20H28Z"/></svg></div>
            <div class="w-full h-[162px] border-b-2 border-[#939393] flex flex-col items-center"><svg class="size-6 mt-[30px]" viewBox="0 0 24 24"><path d="M12 0V24M0 12H24" stroke="currentColor" stroke-width="3.800"/></svg><div class="w-6 h-1 mt-[66px] bg-[#4d4d4d]"></div></div>
            <svg class="w-2 h-7 mt-[29px]"><use href="#dots"/></svg>
          </div>
        </div>

        <!-- object properties -->
        <div class="flex-1 flex flex-col">
          <div class="h-[124px] border-b-2 border-[#949494] pl-10 pr-[50px] flex items-center justify-between"><span class="font-semibold">Object properties</span><svg class="size-5 mt-1 text-[#4d4d4d]"><use href="#x"/></svg></div>
          <div class="px-10 flex flex-col">
            <div class="mt-[68px] flex justify-between"><span class="mt-3">Opacity</span>
              <div class="w-64"><div class="h-7 flex items-center"><div class="w-[43px] h-1 bg-black"></div><div class="size-7 rounded-full bg-black"></div><div class="flex-1 h-1 bg-[#818181]"></div></div><div class="mt-[14px]">30 %</div></div>
            </div>
            <div class="mt-[18px] h-8 flex items-center"><div class="size-8 rounded-[3px] bg-black flex items-center justify-center"><svg class="size-6" viewBox="0 0 24 24"><path d="M2 13 9 20 22 3" fill="none" stroke="#adadad" stroke-width="2.800"/></svg></div><span class="ml-6 -mt-0.5">Show fill</span></div>
            <div class="mt-[34px] h-[50px] flex justify-between"><span class="mt-0.5">Fill Color</span><div class="size-[50px] border-2 border-[#969696] bg-[#aba84f]"></div></div>
            <div class="mt-[28px] h-8 flex items-center"><div class="size-8 rounded-[3px] bg-black flex items-center justify-center"><svg class="size-6" viewBox="0 0 24 24"><path d="M2 13 9 20 22 3" fill="none" stroke="#adadad" stroke-width="2.800"/></svg></div><span class="ml-6 -mt-0.5">Show Outline</span></div>
            <div class="mt-[18px] h-14 flex justify-between"><span class="mt-3">Outline width</span><div class="w-[174px] h-14 border-2 border-[#969696] pr-[29px] pt-[6px] text-right">3</div></div>
            <div class="mt-8 h-[50px] flex justify-between"><span class="mt-1">Outline Color</span><div class="size-[50px] border-2 border-[#969696] bg-[#aba84f]"></div></div>
            <div class="mt-[50px] h-14 bg-[#adadad] shadow-[0_3px_5px_rgba(0,0,0,0.4)] text-[24px] text-[#3b3b3b] font-semibold text-center leading-[55px]">DELETE SHAPE</div>
          </div>
        </div>
      </div>
    </div>
  </div>
</div>

<div class="absolute inset-0 rounded-[20px] border-2 border-white/25 pointer-events-none"></div>

<!-- properties dialog -->
<div class="absolute left-[870px] top-[558px] w-[1392px] h-[1386px] bg-white px-10 text-[#212121] shadow-[0_22px_30px_-14px_rgba(0,0,0,0.2),0_48px_76px_6px_rgba(0,0,0,0.14),0_18px_92px_16px_rgba(0,0,0,0.12)]">
  <div class="h-[124px] border-b-2 border-[#dedede] flex items-center">
    <svg class="size-[42px] [--bg:#fff] [--road:#dadada] [--lot:#fcf872]"><use href="#oreb"/></svg>
    <span class="ml-[22px] font-semibold">CH207991359974 Properties</span>
    <svg class="size-5 ml-auto mr-[10px] mt-[2px] text-[#777]"><use href="#x"/></svg>
  </div>
  <div id="rows" class="pt-[40px] flex flex-col gap-[10px]"></div>
</div>
</div>
</div>

<script>
const rows = [
  ["ADRESSZEILE", "Stampfenbachstrasse 12"], ["BFS NR", "261"], ["BGDI STATUS", "0"], ["EGRIS EGRID", "CH207991359974"],
  ["EMAIL", "are.vermessung@bd.zh.ch"], ["FID", "261"], ["FIRMENNAME", "Baudirektion des Kantons Zürich, Amt für Raumentwicklung ARE"],
  ["GEMEINDENAME", "Zürich"], ["KANTON", "Zürich"], ["LABEL", "Zürich"], ["NUMBER", "RI3188"],
  ["OEREB EXTRACT PDF", "https://maps.zh.ch/oereb/extract/reduced/pdf/CH207991359974"], ["OEREB EXTRACT URL", "null"],
  ["OEREB STATUS DE", "ÖREB-Kataster eingeführt"], ["OEREB STATUS EN", "ÖREB-Kataster eingeführt"],
  ["OEREB STATUS FR", "Cadastre RDPPF introduit"], ["OEREB STATUS IT", "Catasto RDPP introdotto"],
  ["OEREB STATUS RM", "ÖREB-Kataster eingeführt"], ["OEREB WEBSERVICE", "https://maps.zh.ch/oereb"], ["ORT", "Zürich"], ["PLZ", "8090"],
  ["REALESTATE TYPE", "Liegenschaft"], ["TELEFON", "043 259 30 22"],
  ["URL OEREB", "http://www.maps.zh.ch/?topic=OerebKatasterZH&amp;locate=gemeinden&amp;locations=261"]
];
document.getElementById("rows").innerHTML = rows.map(([k, v]) =>
  `<div class="flex items-baseline whitespace-nowrap"><span>${k}</span><i class="${v.length > 65 ? "flex-1" : "flex-1 mx-[14px] border-b-2 border-dotted border-[#b5b5b5] translate-y-0.5"}"></i><b class="font-semibold">${v}</b></div>`).join("");
</script>
</body>
</html></script>
